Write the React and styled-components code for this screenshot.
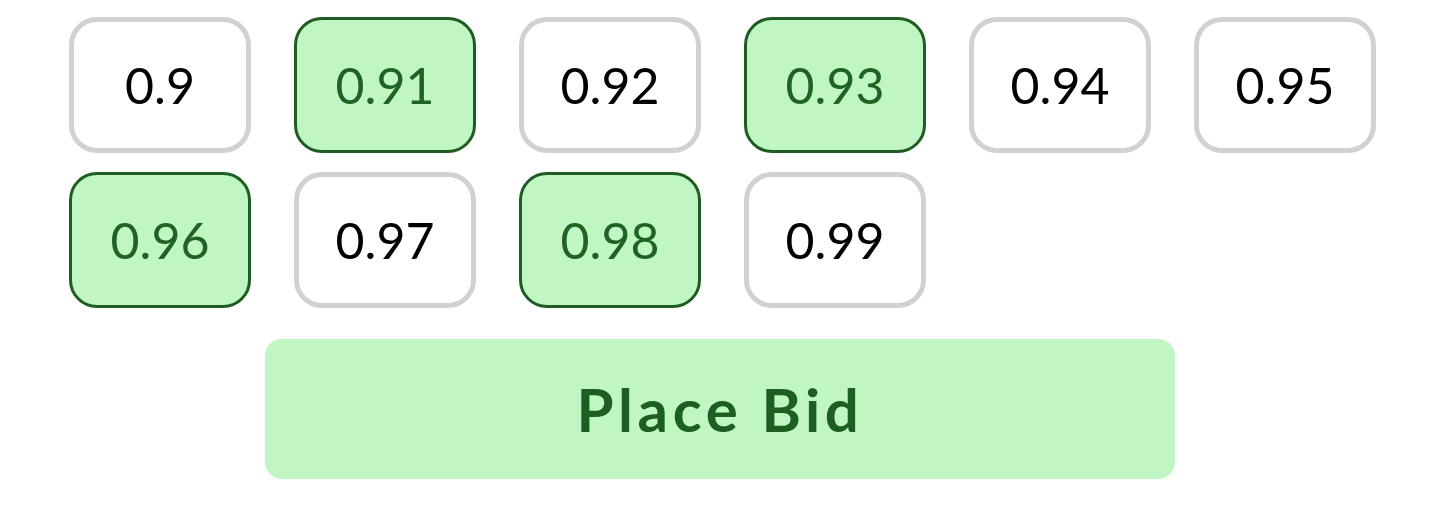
import React, { useState } from 'react';
import styled, { createGlobalStyle } from 'styled-components';

const GlobalStyle = createGlobalStyle`
  body {
    margin: 0;
    background: #ffffff;
    font-family: Lato, "Liberation Sans", sans-serif;
  }
`;

const Page = styled.div`
  display: flex;
  flex-direction: column;
  align-items: center;
  padding-top: 17px;
`;

const OptionGrid = styled.div`
  display: flex;
  flex-wrap: wrap;
  gap: 19px 43px;
  width: 1307px;
  margin-left: 5px;
`;

const Option = styled.button`
  box-sizing: border-box;
  width: 182px;
  height: 136px;
  display: flex;
  align-items: center;
  justify-content: center;
  border-radius: 28px;
  font-family: Lato, "Liberation Sans", sans-serif;
  font-size: 50px;
  font-weight: 400;
  cursor: pointer;
  padding: 0;
  background: ${(p) => (p.$selected ? '#bff6c3' : '#ffffff')};
  color: ${(p) => (p.$selected ? '#1f6324' : '#000000')};
  border: ${(p) => (p.$selected ? '3px solid #1f5c22' : '5px solid #d1d1d1')};
`;

const BidButton = styled.button`
  margin-top: 31px;
  width: 910px;
  height: 140px;
  border: none;
  border-radius: 17px;
  background: #bff6c3;
  color: #1d5f22;
  font-family: Lato, "Liberation Sans", sans-serif;
  font-size: 60px;
  font-weight: 700;
  letter-spacing: 4.6px;
  cursor: pointer;
`;

const prices = ['0.9', '0.91', '0.92', '0.93', '0.94', '0.95', '0.96', '0.97', '0.98', '0.99'];

const App = () => {
  const [selected, setSelected] = useState(['0.91', '0.93', '0.96', '0.98']);

  const toggle = (price) => {
    setSelected((prev) =>
      prev.includes(price) ? prev.filter((p) => p !== price) : [...prev, price]
    );
  };

  return (
    <>
      <GlobalStyle />
      <Page>
        <OptionGrid>
          {prices.map((price) => (
            <Option
              key={price}
              $selected={selected.includes(price)}
              onClick={() => toggle(price)}
            >
              {price}
            </Option>
          ))}
        </OptionGrid>
        <BidButton>Place Bid</BidButton>
      </Page>
    </>
  );
};

export default App;
